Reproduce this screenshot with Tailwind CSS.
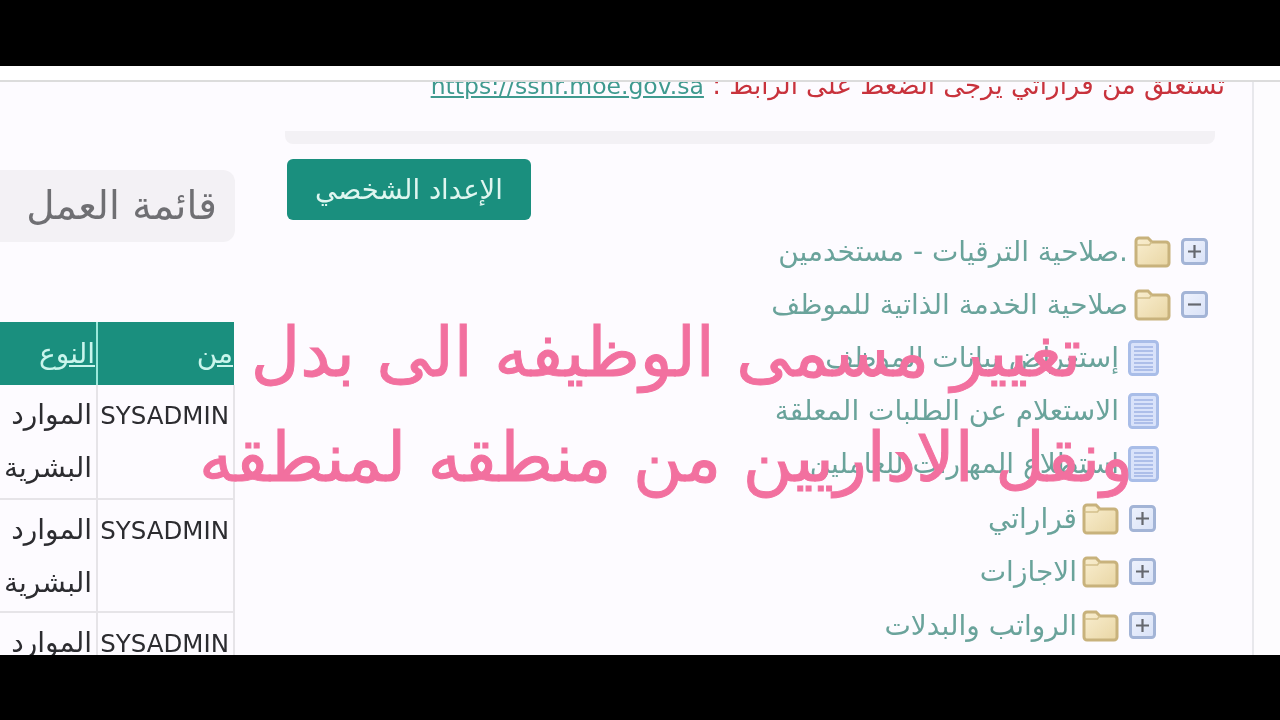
<!doctype html>
<html>
<head>
  <meta charset="utf-8"/>
  <title>قائمة العمل</title>
  <script src="https://cdn.jsdelivr.net/npm/@tailwindcss/browser@4"></script>
</head>
<body class="bg-black h-[720px] overflow-hidden font-['DejaVu_Sans',sans-serif]">
  <!-- shared icons -->
  <svg width="0" height="0" class="absolute">
    <defs>
      <linearGradient id="folderFill" x1="0" y1="0" x2="1" y2="1"><stop offset="0" stop-color="#f9eed0"/><stop offset="1" stop-color="#e9d6a4"/></linearGradient>
      <linearGradient id="boxFill" x1="0" y1="0" x2="1" y2="1"><stop offset="0" stop-color="#eef2fd"/><stop offset="1" stop-color="#d9e2f7"/></linearGradient>
      <symbol id="plus" viewBox="0 0 29 29"><rect x="2.500" y="2.500" width="24" height="24" rx="3" fill="url(#boxFill)" stroke="#a3b4d6" stroke-width="3"/><path d="M8 14.500h13M14.500 8v13" stroke="#65686f" stroke-width="2.200"/></symbol>
      <symbol id="minus" viewBox="0 0 29 29"><rect x="2.500" y="2.500" width="24" height="24" rx="3" fill="url(#boxFill)" stroke="#a3b4d6" stroke-width="3"/><path d="M8 14.500h13" stroke="#65686f" stroke-width="2.200"/></symbol>
      <symbol id="folder" viewBox="0 0 37 32"><path d="M2 5a3 3 0 0 1 3-3h9l4 4h14a3 3 0 0 1 3 3v18a3 3 0 0 1-3 3H5a3 3 0 0 1-3-3z" fill="url(#folderFill)" stroke="#c8b27c" stroke-width="3"/><path d="M2.500 9h13l2-3" fill="none" stroke="#d3c08c" stroke-width="1.500"/></symbol>
      <symbol id="doc" viewBox="0 0 31 36"><rect x="1.500" y="1.500" width="28" height="33" rx="3" fill="#d9e2fa" stroke="#a9bde8" stroke-width="3"/><path d="M6 7h19M6 11h19M6 15h19M6 19h19M6 23h19M6 27h19M6 30h19" stroke="#9fb3e4" stroke-width="1.500"/></symbol>
    </defs>
  </svg>

  <div class="h-[66px]"></div>

  <div class="relative h-[589px] bg-[#fdfbff] overflow-hidden blur-[0.5px]">
    <!-- top strip -->
    <div class="relative z-10 h-[16px] bg-white border-b-2 border-[#dcdcdc]"></div>

    <div class="flex h-[573px]">
      <!-- left column -->
      <div class="w-[235px] shrink-0 pt-[88px]">
        <div dir="rtl" class="h-[72px] bg-[#f3f1f5] rounded-r-xl flex items-center pr-[18px] text-[39px] text-[#6f6f73]">قائمة العمل</div>

        <table class="mt-[80px] ml-[-4px] w-[239px] table-fixed border-collapse" dir="ltr">
          <thead>
            <tr class="h-[63px] bg-[#1a8f7e] text-[#c9f5ec] text-[28px]">
              <th class="w-[101px] border-r-2 border-[#9be8da] font-normal text-right align-middle pr-px"><u>النوع</u></th>
              <th class="font-normal text-right align-middle pr-px"><u>من</u></th>
            </tr>
          </thead>
          <tbody class="text-[#2c2c30]">
            <tr class="h-[114px] border-b-2 border-[#e6e4e8]">
              <td dir="rtl" class="border-r-2 border-[#e6e4e8] align-top pt-[3px] pr-[4px] text-[28px] leading-[53px]">الموارد البشرية</td>
              <td class="border-r-2 border-[#e6e4e8] align-top pt-[13px] text-right pr-[4px] text-[24.5px] leading-[36px]">SYSADMIN</td>
            </tr>
            <tr class="h-[113px] border-b-2 border-[#e6e4e8]">
              <td dir="rtl" class="border-r-2 border-[#e6e4e8] align-top pt-[3px] pr-[4px] text-[28px] leading-[53px]">الموارد البشرية</td>
              <td class="border-r-2 border-[#e6e4e8] align-top pt-[13px] text-right pr-[4px] text-[24.5px] leading-[36px]">SYSADMIN</td>
            </tr>
            <tr class="h-[113px]">
              <td dir="rtl" class="border-r-2 border-[#e6e4e8] align-top pt-[3px] pr-[4px] text-[28px] leading-[53px]">الموارد البشرية</td>
              <td class="border-r-2 border-[#e6e4e8] align-top pt-[13px] text-right pr-[4px] text-[24.5px] leading-[36px]">SYSADMIN</td>
            </tr>
          </tbody>
        </table>
      </div>

      <!-- main column -->
      <div class="w-[1017px] shrink-0 pl-[50px] pr-[37px] relative">
        <!-- notice, cut off by the strip -->
        <p dir="rtl" class="mt-[-17px] mr-[-10px] h-[40px] whitespace-nowrap text-[26px] leading-[40px] text-[#c8323c]">تستعلق من قراراتي يرجى الضغط على الرابط : <a class="text-[23.500px] text-[#3f9a8f] underline">https://sshr.moe.gov.sa</a></p>
        <div class="mt-[26px] h-[13px] bg-[#f3f1f5] rounded-b-lg"></div>
        <button class="block mt-[15px] ml-[2px] w-[244px] h-[61px] rounded-md bg-[#1a8f7e] text-[#dff6f0] text-[27.500px]" dir="rtl">الإعداد الشخصي</button>

        <!-- tree -->
        <div dir="rtl" class="mt-[5px] pr-[6px] text-[28px] text-[#6aa39b]">
          <div class="h-[53px] flex items-center">
            <svg class="ml-[9px] shrink-0" width="29" height="29"><use href="#plus"/></svg>
            <svg class="ml-[6px] shrink-0" width="37" height="32"><use href="#folder"/></svg>
            <span>.صلاحية الترقيات - مستخدمين</span>
          </div>
          <div class="h-[53px] flex items-center">
            <svg class="ml-[9px] shrink-0" width="29" height="29"><use href="#minus"/></svg>
            <svg class="ml-[6px] shrink-0" width="37" height="32"><use href="#folder"/></svg>
            <span>صلاحية الخدمة الذاتية للموظف</span>
          </div>
          <div class="h-[53px] flex items-center pr-[50px]">
            <svg class="ml-[9px] shrink-0" width="31" height="36"><use href="#doc"/></svg>
            <span>إستعراض بيانات الموظف</span>
          </div>
          <div class="h-[53px] flex items-center pr-[50px]">
            <svg class="ml-[9px] shrink-0" width="31" height="36"><use href="#doc"/></svg>
            <span>الاستعلام عن الطلبات المعلقة</span>
          </div>
          <div class="h-[53px] flex items-center pr-[50px]">
            <svg class="ml-[9px] shrink-0" width="31" height="36"><use href="#doc"/></svg>
            <span>إستطلاع المهارات للعاملين</span>
          </div>
          <div class="h-[53px] mt-[2px] flex items-center pr-[52px]">
            <svg class="ml-[9px] shrink-0" width="29" height="29"><use href="#plus"/></svg>
            <svg class="ml-[5px] shrink-0" width="37" height="32"><use href="#folder"/></svg>
            <span>قراراتي</span>
          </div>
          <div class="h-[53px] flex items-center pr-[52px]">
            <svg class="ml-[9px] shrink-0" width="29" height="29"><use href="#plus"/></svg>
            <svg class="ml-[5px] shrink-0" width="37" height="32"><use href="#folder"/></svg>
            <span>الاجازات</span>
          </div>
          <div class="h-[53px] mt-px flex items-center pr-[52px]">
            <svg class="ml-[9px] shrink-0" width="29" height="29"><use href="#plus"/></svg>
            <svg class="ml-[5px] shrink-0" width="37" height="32"><use href="#folder"/></svg>
            <span>الرواتب والبدلات</span>
          </div>
        </div>
      </div>

      <!-- right gutter -->
      <div class="flex-1 bg-[#fdfcfe] border-l-2 border-[#e8e8ec]"></div>
    </div>

    <!-- pink caption burned over the video -->
    <div dir="rtl" class="absolute left-[26px] top-[234px] w-[1280px] text-center text-[68px] leading-[105px] text-[#f2709f] [-webkit-text-stroke:1px_#f2709f] z-20 pointer-events-none">
      <div>تغيير مسمى الوظيفه الى بدل</div>
      <div>ونقل الاداريين من منطقه لمنطقه</div>
    </div>
  </div>
</body>
</html>
